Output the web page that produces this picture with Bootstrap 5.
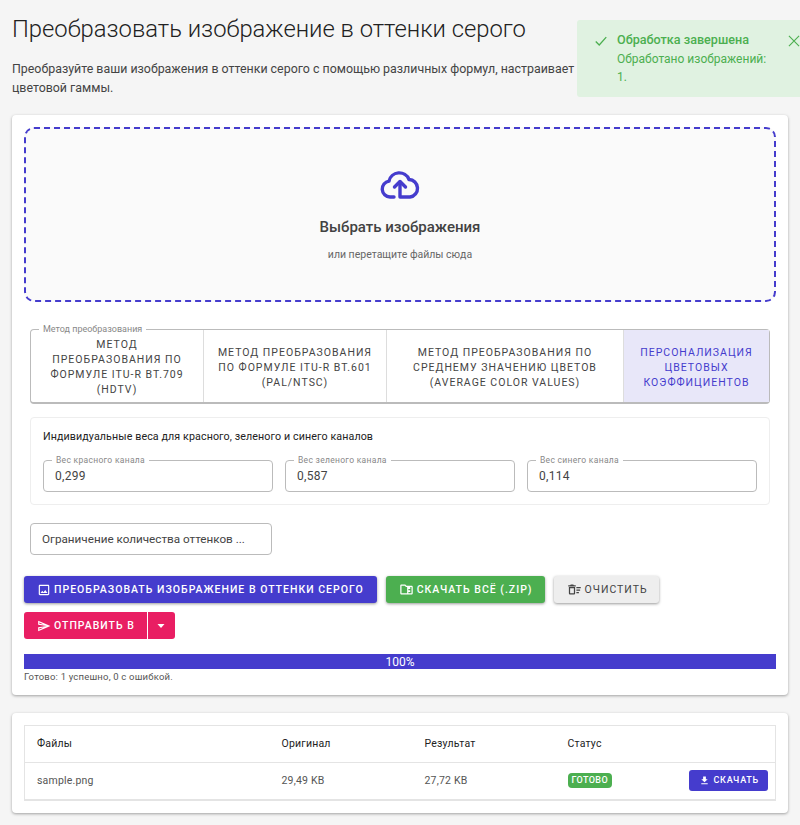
<!DOCTYPE html>
<html lang="ru">
<head>
    <meta charset="UTF-8">
    <meta name="viewport" content="width=device-width, initial-scale=1.0">
    <title>Оттенки серого</title>
    <link href="https://cdn.jsdelivr.net/npm/bootstrap@5.3.0/dist/css/bootstrap.min.css" rel="stylesheet">
    <style>
        html, body {
            height: 825px;
            overflow: hidden;
        }
        body {
            background-color: #f5f5f5;
            font-family: Roboto, "Liberation Sans", sans-serif;
            color: #333;
            position: relative;
        }
        .page-wrap {
            padding: 11px 12px 0;
        }
        .page-title {
            font-size: 23.8px;
            font-weight: 300;
            line-height: 36px;
            margin: 0 0 13px;
            color: #212121;
            white-space: nowrap;
        }
        .page-intro {
            font-size: 12.4px;
            line-height: 18.5px;
            margin: 0 0 18px;
            color: #444;
        }
        .panel {
            background: #fff;
            border: 0;
            border-radius: 4px;
            box-shadow: 0 1px 3px rgba(0,0,0,.35);
            padding: 12px;
        }
        .drop-zone {
            height: 175px;
            border: 2px dashed #453ccd;
            border-radius: 10px;
            background: #fafafa;
            text-align: center;
            padding-top: 40px;
        }
        .drop-zone svg {
            display: block;
            margin: 0 auto 15px;
        }
        .drop-title {
            font-size: 15px;
            font-weight: 500;
            line-height: 22px;
            color: #424242;
            margin-bottom: 9px;
        }
        .drop-hint {
            font-size: 10.5px;
            line-height: 16px;
            color: #666;
        }
        .outline-box {
            position: relative;
        }
        .notch-label {
            position: absolute;
            top: -6px;
            left: 8px;
            padding: 0 4px;
            background: #fff;
            font-size: 8.5px;
            line-height: 11px;
            color: #888;
            white-space: nowrap;
        }
        .method-group {
            margin: 27px 6px 0;
            height: 75px;
            border: 1px solid #bbb;
            border-bottom-width: 2px;
            border-radius: 4px;
        }
        .method-group > .notch-label {
            font-size: 9px;
        }
        .method-item {
            display: flex;
            align-items: center;
            justify-content: center;
            text-align: center;
            padding: 2px 10px 0;
            font-size: 10.5px;
            line-height: 15px;
            letter-spacing: 1px;
            color: #444;
            border-right: 1px solid #ddd;
        }
        .method-item:last-child {
            border-right: 0;
        }
        .method-a { flex: 0 0 173px; padding: 2px 12px 0; }
        .method-b { flex: 0 0 183px; }
        .method-c { flex: 0 0 237px; }
        .method-d { flex: 0 0 145px; }
        .method-item.picked {
            background: #e8e7f9;
            color: #453ccd;
        }
        .weights-box {
            margin: 13px 6px 0;
            height: 88px;
            border: 1px solid #eee;
            border-radius: 4px;
            padding: 11px 12px 0;
        }
        .weights-title {
            font-size: 10.7px;
            line-height: 16px;
            letter-spacing: .1px;
            color: #222;
            margin-bottom: 15px;
        }
        .weights-row {
            gap: 12px;
        }
        .weight-field {
            border: 1px solid #bbb;
            border-radius: 4px;
            height: 32px;
            flex: 1 1 0;
            font-size: 12px;
            line-height: 30px;
            letter-spacing: .3px;
            padding: 0 11px;
            color: #444;
        }
        .limit-field {
            margin: 18px 0 0 6px;
            width: 242px;
            height: 32px;
            border: 1px solid #bbb;
            border-radius: 4px;
            font-size: 11.7px;
            line-height: 30px;
            padding: 0 11px;
            color: #444;
            white-space: nowrap;
        }
        .action-row {
            gap: 9px;
            margin-top: 21px;
        }
        .act-btn {
            display: inline-flex;
            align-items: center;
            flex-shrink: 0;
            height: 27px;
            padding: 0 12px 0 13px;
            border: 0;
            border-radius: 3px;
            font-size: 10.5px;
            font-weight: 500;
            letter-spacing: 1px;
            white-space: nowrap;
            box-shadow: 0 1px 3px rgba(0,0,0,.4);
        }
        .act-btn svg {
            margin-right: 3px;
            fill: currentColor;
            flex-shrink: 0;
        }
        .act-indigo { background: #453ccd; color: #fff; padding-right: 13px; }
        .act-green { background: #4caf50; color: #fff; }
        .act-grey { background: #eee; color: #444; font-weight: 400; padding-right: 11px; }
        .act-pink { background: #e91e63; color: #fff; box-shadow: none; }
        .send-group {
            display: flex;
            width: 151px;
            margin-top: 9px;
        }
        .send-group .caret-btn {
            margin-left: 1px !important;
            padding: 0;
            width: 27px;
            justify-content: center;
        }
        .send-group .caret-btn svg {
            margin: 0;
        }
        .done-bar {
            height: 15px;
            margin-top: 15px;
            border-radius: 0;
            --bs-progress-bar-bg: #453ccd;
            --bs-progress-bg: #453ccd;
            --bs-progress-font-size: 12px;
        }
        .done-note {
            font-size: 9.5px;
            line-height: 14px;
            letter-spacing: .2px;
            color: #555;
            margin-top: 1px;
            height: 13px;
        }
        .files-panel {
            margin-top: 18px;
            height: 100px;
        }
        .files-table {
            border: 1px solid #e4e4e4;
            border-bottom-width: 2px;
            margin: 0;
            table-layout: fixed;
            font-size: 10.5px;
            letter-spacing: .2px;
        }
        .col-name { width: 245px; }
        .col-size { width: 143px; }
        .files-table th,
        .files-table td {
            padding: 0 12px;
            height: 37px;
            vertical-align: middle;
            border-color: #e4e4e4;
            box-shadow: none;
        }
        .files-table th {
            font-weight: 400;
            color: #222;
        }
        .files-table td {
            color: #555;
            border-bottom: 0;
        }
        .state-badge {
            background: #4caf50;
            font-size: 9px;
            font-weight: 500;
            letter-spacing: .4px;
            padding: 3px 4px;
            border-radius: 4px;
        }
        .row-btn {
            height: 21px;
            font-size: 9px;
            padding: 0 9px 0 10px;
            letter-spacing: .75px;
            box-shadow: none;
            margin-right: -5px;
        }
        .toast-box {
            position: absolute;
            top: 20px;
            left: 577px;
            width: 236px;
            height: 77px;
            background: #e0f2e1;
            border-radius: 3px;
            color: #4caf50;
            font-size: 12px;
            line-height: 18px;
            padding: 11px 12px 0 40px;
        }
        .toast-box strong {
            display: block;
            font-size: 12.6px;
            font-weight: 500;
            margin-bottom: 1px;
        }
        .toast-msg {
            width: 160px;
            display: block;
        }
        .toast-tick {
            position: absolute;
            left: 17px;
            top: 14px;
        }
        .toast-close {
            position: absolute;
            left: 211px;
            top: 15px;
        }
    </style>
</head>
<body>
    <div class="page-wrap">
        <h1 class="page-title">Преобразовать изображение в оттенки серого</h1>
        <p class="page-intro text-nowrap">Преобразуйте ваши изображения в оттенки серого с помощью различных формул, настраивает баланс<br>цветовой гаммы.</p>

        <div class="card panel">
            <div class="drop-zone">
                <svg width="40" height="32" viewBox="0 0 40 32" fill="none" stroke="#453ccd" stroke-width="3.4" stroke-linecap="round" stroke-linejoin="round">
                    <path d="M14 28H10a8 8 0 0 1-1-15.9A10.5 10.5 0 0 1 29 10.5 8.8 8.8 0 0 1 30 28H20V13"/>
                    <path d="M14.5 18l5.5-5.5 5.5 5.5"/>
                </svg>
                <div class="drop-title">Выбрать изображения</div>
                <div class="drop-hint">или перетащите файлы сюда</div>
            </div>

            <div class="outline-box method-group d-flex">
                <span class="notch-label">Метод преобразования</span>
                <div class="method-item method-a">МЕТОД ПРЕОБРАЗОВАНИЯ ПО ФОРМУЛЕ ITU-R BT.709 (HDTV)</div>
                <div class="method-item method-b">МЕТОД ПРЕОБРАЗОВАНИЯ ПО ФОРМУЛЕ ITU-R BT.601 (PAL/NTSC)</div>
                <div class="method-item method-c">МЕТОД ПРЕОБРАЗОВАНИЯ ПО СРЕДНЕМУ ЗНАЧЕНИЮ ЦВЕТОВ (AVERAGE COLOR VALUES)</div>
                <div class="method-item method-d picked">ПЕРСОНАЛИЗАЦИЯ ЦВЕТОВЫХ КОЭФФИЦИЕНТОВ</div>
            </div>

            <div class="weights-box">
                <div class="weights-title">Индивидуальные веса для красного, зеленого и синего каналов</div>
                <div class="d-flex weights-row">
                    <div class="outline-box weight-field"><span class="notch-label">Вес красного канала</span>0,299</div>
                    <div class="outline-box weight-field"><span class="notch-label">Вес зеленого канала</span>0,587</div>
                    <div class="outline-box weight-field"><span class="notch-label">Вес синего канала</span>0,114</div>
                </div>
            </div>

            <div class="limit-field">Ограничение количества оттенков ...</div>

            <div class="d-flex action-row">
                <button type="button" class="btn act-btn act-indigo">
                    <svg width="14" height="14" viewBox="0 0 24 24"><path d="M19 5v14H5V5h14m0-2H5c-1.1 0-2 .9-2 2v14c0 1.1.9 2 2 2h14c1.1 0 2-.9 2-2V5c0-1.1-.9-2-2-2zm-4.86 8.86l-3 3.87L9 13.14 6 17h12l-3.86-5.14z"/></svg>
                    ПРЕОБРАЗОВАТЬ ИЗОБРАЖЕНИЕ В ОТТЕНКИ СЕРОГО
                </button>
                <button type="button" class="btn act-btn act-green">
                    <svg width="15" height="15" viewBox="0 0 24 24"><path d="M20 6h-8l-2-2H4c-1.1 0-2 .9-2 2v12c0 1.1.9 2 2 2h16c1.1 0 2-.9 2-2V8c0-1.1-.9-2-2-2zM4 18V6h5.2l2 2H13v10H4zm16 0h-5v-2h3v-3h-3v-2h3V8h2v10z"/></svg>
                    СКАЧАТЬ ВСЁ (.ZIP)
                </button>
                <button type="button" class="btn act-btn act-grey">
                    <svg width="15" height="15" viewBox="0 0 24 24"><path d="M15 16h4v2h-4zm0-8h7v2h-7zm0 4h6v2h-6zM3 18c0 1.1.9 2 2 2h6c1.1 0 2-.9 2-2V8H3v10zm2-8h6v8H5v-8zm5-6H6L5 5H2v2h12V5h-3z"/></svg>
                    ОЧИСТИТЬ
                </button>
            </div>

            <div class="btn-group send-group">
                <button type="button" class="btn act-btn act-pink">
                    <svg width="14" height="14" viewBox="0 0 24 24"><path d="M4.01 6.03l7.51 3.22-7.52-1 .01-2.22m7.5 8.72L4 17.97v-2.22l7.51-1M2.01 3L2 10l15 2-15 2 .01 7L23 12 2.01 3z"/></svg>
                    ОТПРАВИТЬ В
                </button>
                <button type="button" class="btn act-btn act-pink caret-btn" aria-label="Ещё">
                    <svg width="12" height="12" viewBox="0 0 24 24"><path d="M5 8h14l-7 8z"/></svg>
                </button>
            </div>

            <div class="progress done-bar">
                <div class="progress-bar w-100">100%</div>
            </div>
            <div class="done-note">Готово: 1 успешно, 0 с ошибкой.</div>
        </div>

        <div class="card panel files-panel">
            <table class="table files-table">
                <colgroup>
                    <col class="col-name">
                    <col class="col-size">
                    <col class="col-size">
                    <col>
                </colgroup>
                <thead>
                    <tr>
                        <th>Файлы</th>
                        <th>Оригинал</th>
                        <th>Результат</th>
                        <th>Статус</th>
                    </tr>
                </thead>
                <tbody>
                    <tr>
                        <td>sample.png</td>
                        <td>29,49 KB</td>
                        <td>27,72 KB</td>
                        <td>
                            <div class="d-flex justify-content-between align-items-center">
                                <span class="badge state-badge">ГОТОВО</span>
                                <button type="button" class="btn act-btn act-indigo row-btn">
                                    <svg width="11" height="11" viewBox="0 0 24 24"><path d="M5 20h14v-2H5v2zM19 9h-4V3H9v6H5l7 7 7-7z"/></svg>
                                    СКАЧАТЬ
                                </button>
                            </div>
                        </td>
                    </tr>
                </tbody>
            </table>
        </div>
    </div>

    <div class="toast-box" role="status">
        <svg class="toast-tick" width="14" height="14" viewBox="0 0 16 16" fill="none" stroke="#4caf50" stroke-width="1.5"><path d="M2 8.5l4 4 8-9"/></svg>
        <strong>Обработка завершена</strong>
        <span class="toast-msg">Обработано изображений: 1.</span>
        <svg class="toast-close" width="12" height="12" viewBox="0 0 13 13" fill="none" stroke="#4caf50" stroke-width="1.2"><path d="M1 1l11 11M12 1L1 12"/></svg>
    </div>
</body>
</html>
